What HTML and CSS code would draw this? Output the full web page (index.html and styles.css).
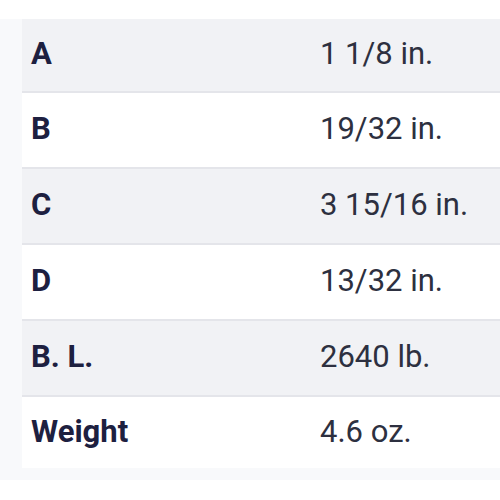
FILE: index.html
```html
<!DOCTYPE html>
<html>
<head>
<meta charset="utf-8">
<link rel="stylesheet" href="styles.css">
</head>
<body>
<div class="panel">
  <table class="specs">
    <tr class="first"><th>A</th><td>1 1/8 in.</td></tr>
    <tr><th>B</th><td>19/32 in.</td></tr>
    <tr><th>C</th><td>3 15/16 in.</td></tr>
    <tr><th>D</th><td>13/32 in.</td></tr>
    <tr><th>B. L.</th><td>2640 lb.</td></tr>
    <tr class="last"><th>Weight</th><td>4.6 oz.</td></tr>
  </table>
</div>
</body>
</html>
```
FILE: styles.css
```css
html, body {
  margin: 0;
  padding: 0;
  background: #ffffff;
}
body {
  padding-top: 19px;
  font-family: Roboto, "Liberation Sans", sans-serif;
}
.panel {
  background: #f8f9fb;
  padding: 0 0 12px 22px;
}
.specs {
  width: 100%;
  border-collapse: collapse;
}
.specs tr {
  height: 76px;
  border-bottom: 2px solid #e4e5ea;
}
.specs tr:nth-child(odd) {
  background: #f1f2f5;
}
.specs tr:nth-child(even) {
  background: #ffffff;
}
.specs tr.first {
  height: 73px;
}
.specs tr.last {
  height: 72px;
  border-bottom: none;
}
.specs th {
  width: 289px;
  padding: 0 0 3px 9px;
  text-align: left;
  font-weight: 700;
  font-size: 31px;
  color: #1d2040;
}
.specs td {
  padding: 0 0 3px 0;
  font-weight: 400;
  font-size: 31px;
  color: #2d3040;
}
```
